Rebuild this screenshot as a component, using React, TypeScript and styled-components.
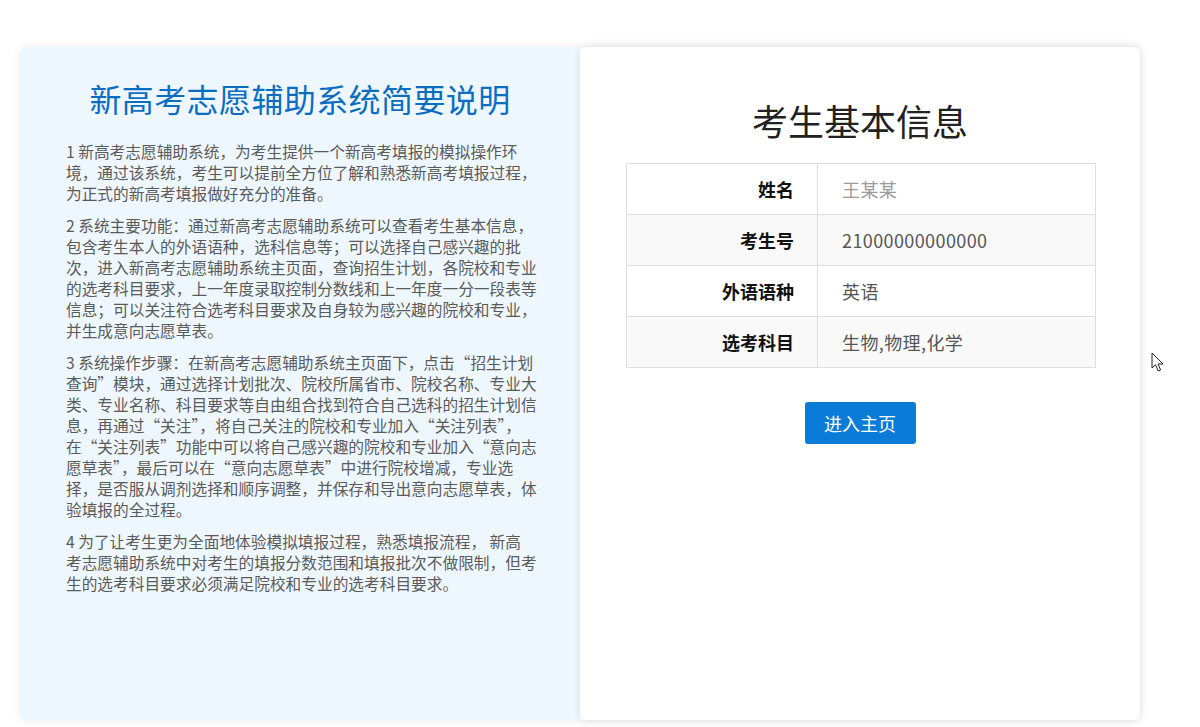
import React from "react";
import styled, { createGlobalStyle } from "styled-components";

const GlobalStyle = createGlobalStyle`
  html, body {
    margin: 0;
    padding: 0;
    background: #ffffff;
    font-family: "Noto Sans CJK SC", "Noto Sans", "Liberation Sans", sans-serif;
  }
  * { box-sizing: border-box; }
`;

const Page = styled.div`
  position: relative;
  width: 1200px;
  height: 727px;
  padding: 47px 60px 7px 20px;
  overflow: hidden;
`;

const Frame = styled.div`
  display: flex;
  height: 673px;
  box-shadow: 0 0 10px rgba(0, 0, 0, 0.08);
  border-radius: 6px;
`;

const IntroPanel = styled.section`
  width: 560px;
  background: #eff7fe;
  padding: 34px 20px 0 46px;
  border-radius: 6px 0 0 6px;
`;

const IntroTitle = styled.h1`
  margin: 0 0 26px -26px;
  text-align: center;
  font-size: 32px;
  font-weight: 400;
  line-height: 34px;
  color: #0b6dc0;
  letter-spacing: 0.4px;
`;

const Para = styled.div`
  margin: 0 0 11px 0;
  font-size: 15.7px;
  color: #5a5a5a;
  white-space: nowrap;
`;

const Line = styled.span`
  display: block;
  height: 21px;
  line-height: 21px;
`;

const InfoPanel = styled.section`
  width: 560px;
  background: #ffffff;
  border-radius: 6px;
  box-shadow: 0 0 8px rgba(0, 0, 0, 0.1);
  display: flex;
  flex-direction: column;
  align-items: center;
  padding-top: 48px;
`;

const InfoTitle = styled.h2`
  margin: 0 0 18px 0;
  font-size: 36px;
  font-weight: 400;
  line-height: 50px;
  color: #222;
`;

const Table = styled.table`
  width: 470px;
  border-collapse: collapse;
  margin-left: 2px;
`;

const Row = styled.tr<{ $striped: boolean }>`
  background: ${(p) => (p.$striped ? "#f9f9f9" : "#ffffff")};
`;

const Label = styled.th`
  width: 191px;
  height: 51px;
  border: 1px solid #dedede;
  text-align: right;
  padding: 0 23px 0 0;
  font-size: 18px;
  font-weight: 700;
  color: #111;
`;

const Value = styled.td<{ $muted?: boolean }>`
  height: 51px;
  border: 1px solid #dedede;
  padding: 0 0 0 24px;
  font-size: 18px;
  font-weight: 400;
  letter-spacing: 0.4px;
  color: ${(p) => (p.$muted ? "#9a9a9a" : "#555")};
`;

const EnterButton = styled.button`
  margin-top: 34px;
  width: 111px;
  height: 42px;
  border: none;
  border-radius: 3px;
  background: #0a7bd6;
  color: #fff;
  font-family: inherit;
  font-size: 18px;
  cursor: pointer;
`;

const Cursor = styled.svg`
  position: absolute;
  left: 1151px;
  top: 352px;
`;

const paragraphs: string[][] = [
  [
    "1 新高考志愿辅助系统，为考生提供一个新高考填报的模拟操作环",
    "境，通过该系统，考生可以提前全方位了解和熟悉新高考填报过程，",
    "为正式的新高考填报做好充分的准备。",
  ],
  [
    "2 系统主要功能：通过新高考志愿辅助系统可以查看考生基本信息，",
    "包含考生本人的外语语种，选科信息等；可以选择自己感兴趣的批",
    "次，进入新高考志愿辅助系统主页面，查询招生计划，各院校和专业",
    "的选考科目要求，上一年度录取控制分数线和上一年度一分一段表等",
    "信息；可以关注符合选考科目要求及自身较为感兴趣的院校和专业，",
    "并生成意向志愿草表。",
  ],
  [
    "3 系统操作步骤：在新高考志愿辅助系统主页面下，点击“招生计划",
    "查询”模块，通过选择计划批次、院校所属省市、院校名称、专业大",
    "类、专业名称、科目要求等自由组合找到符合自己选科的招生计划信",
    "息，再通过“关注”，将自己关注的院校和专业加入“关注列表”，",
    "在“关注列表”功能中可以将自己感兴趣的院校和专业加入“意向志",
    "愿草表”，最后可以在“意向志愿草表”中进行院校增减，专业选",
    "择，是否服从调剂选择和顺序调整，并保存和导出意向志愿草表，体",
    "验填报的全过程。",
  ],
  [
    "4 为了让考生更为全面地体验模拟填报过程，熟悉填报流程， 新高",
    "考志愿辅助系统中对考生的填报分数范围和填报批次不做限制，但考",
    "生的选考科目要求必须满足院校和专业的选考科目要求。",
  ],
];

const rows = [
  { label: "姓名", value: "王某某", muted: true },
  { label: "考生号", value: "21000000000000" },
  { label: "外语语种", value: "英语" },
  { label: "选考科目", value: "生物,物理,化学" },
];

export default function App() {
  return (
    <>
      <GlobalStyle />
      <Page lang="zh-CN">
        <Frame>
          <IntroPanel>
            <IntroTitle>新高考志愿辅助系统简要说明</IntroTitle>
            {paragraphs.map((lines, i) => (
              <Para key={i}>
                {lines.map((l, j) => (
                  <Line key={j}>{l}</Line>
                ))}
              </Para>
            ))}
          </IntroPanel>
          <InfoPanel>
            <InfoTitle>考生基本信息</InfoTitle>
            <Table>
              <tbody>
                {rows.map((r, i) => (
                  <Row key={r.label} $striped={i % 2 === 1}>
                    <Label>{r.label}</Label>
                    <Value $muted={r.muted}>{r.value}</Value>
                  </Row>
                ))}
              </tbody>
            </Table>
            <EnterButton>进入主页</EnterButton>
          </InfoPanel>
        </Frame>
        <Cursor width="14" height="22" viewBox="0 0 14 22">
          <path
            d="M1 1 L1 16 L4.5 12.8 L7.2 19 L9.6 18 L7 12 L12 12 Z"
            fill="#fff"
            stroke="#222"
            strokeWidth="1"
            strokeLinejoin="round"
          />
        </Cursor>
      </Page>
    </>
  );
}
